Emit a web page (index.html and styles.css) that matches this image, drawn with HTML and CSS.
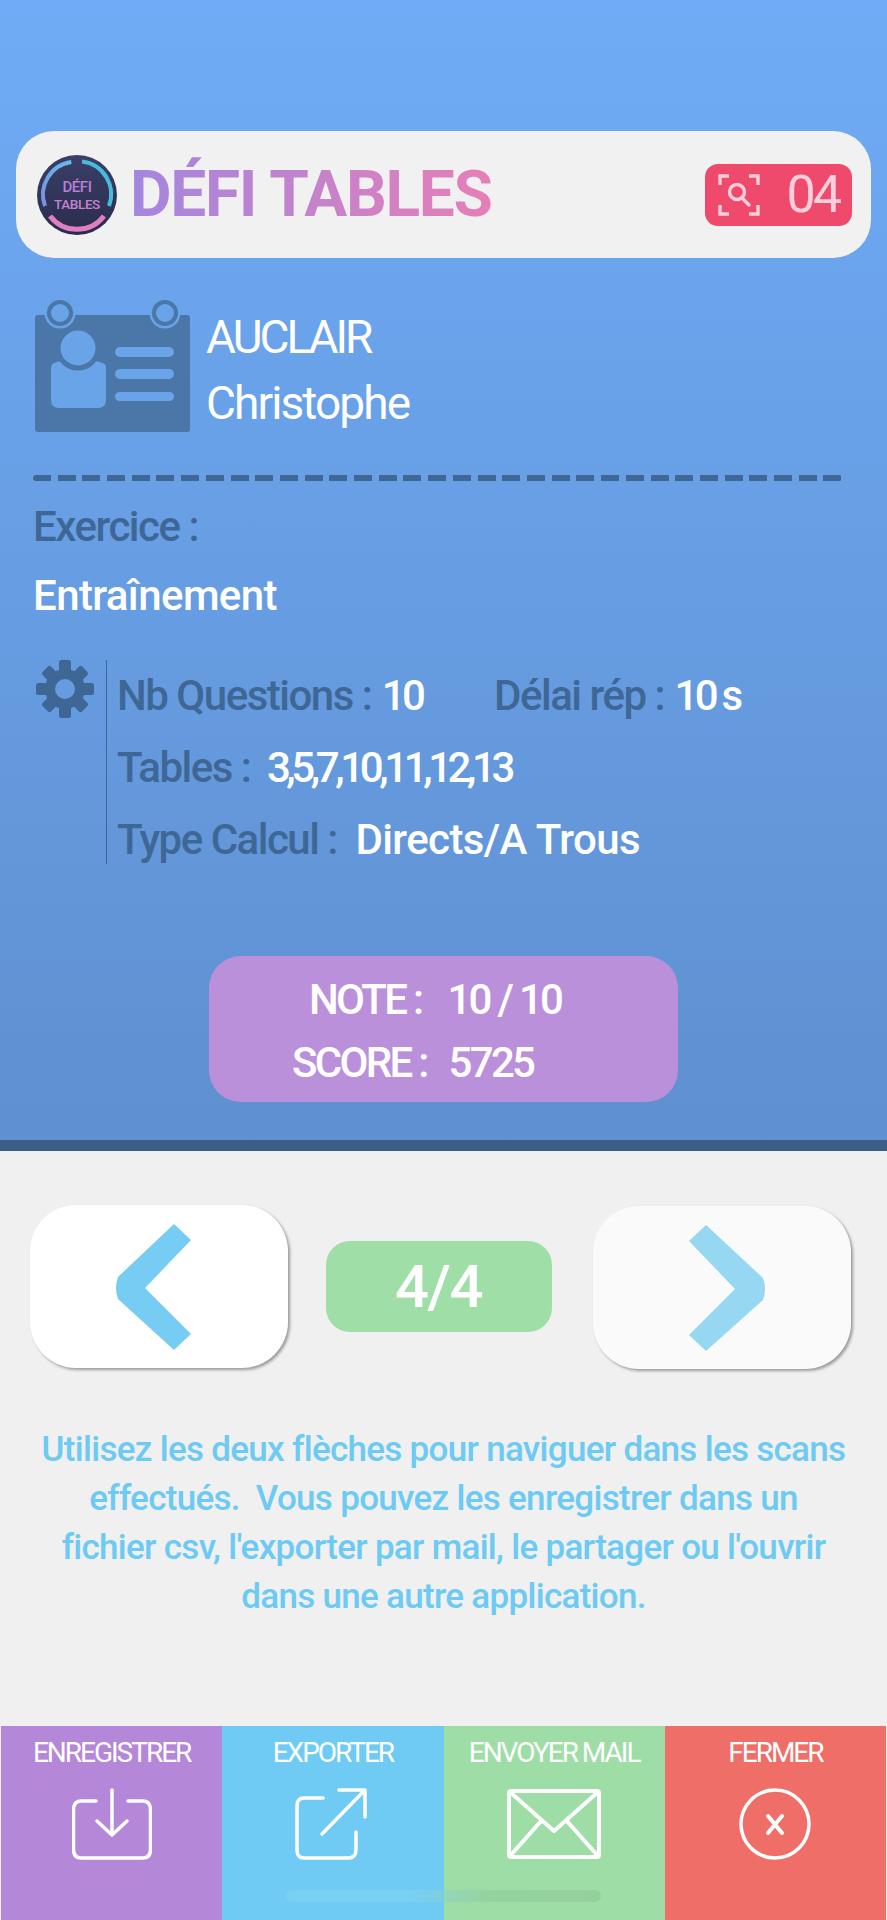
FILE: index.html
```html
<!DOCTYPE html>
<html lang="fr">
<head>
    <meta charset="UTF-8">
    <meta name="viewport" content="width=device-width, initial-scale=1.0">
    <title>Défi Tables</title>
    <link rel="stylesheet" href="styles.css">
</head>
<body>
    <div class="result">
        <div class="header">
            <svg class="logo" viewBox="0 0 80 80">
                <defs>
                    <linearGradient id="logoBg" x1="0" y1="0" x2="0" y2="1">
                        <stop offset="0" stop-color="#3b3f66"/>
                        <stop offset="1" stop-color="#292c4d"/>
                    </linearGradient>
                    <linearGradient id="arcLeft" x1="1" y1="0" x2="0" y2="1">
                        <stop offset="0" stop-color="#62c0ea"/>
                        <stop offset="1" stop-color="#7b8fe0"/>
                    </linearGradient>
                </defs>
                <circle cx="40" cy="40" r="40" fill="url(#logoBg)"/>
                <path d="M34.3 7 A33 33 0 0 0 8 51" fill="none" stroke="url(#arcLeft)" stroke-width="4"/>
                <path d="M45 6.5 A33 33 0 0 1 72 51" fill="none" stroke="#45bcdc" stroke-width="4"/>
                <path d="M13 61 A34 34 0 0 0 67 61" fill="none" stroke="#df7fc0" stroke-width="5"/>
                <text class="logo-text" x="40" y="37" font-size="15" fill="#b77fd8">DÉFI</text>
                <text class="logo-text" x="40" y="54" font-size="13.5" fill="#c583cf">TABLES</text>
            </svg>
            <h1 class="title">DÉFI TABLES</h1>
            <div class="badge">
                <svg class="scan-icon" viewBox="0 0 42 42" fill="none" stroke="#fbd0dc" stroke-width="3.4">
                    <path d="M2 11V2H11M31 2H40V11M2 31V40H11M31 40H40V31"/>
                    <circle cx="19" cy="18" r="7.5"/>
                    <path d="M24 24L31 31" stroke-linecap="round"/>
                </svg>
                <span>04</span>
            </div>
        </div>

        <div class="person">
            <svg class="card-icon" viewBox="0 0 155 132">
                <rect x="0" y="15" width="155" height="117" rx="3" fill="#4a76a8"/>
                <circle cx="25" cy="13" r="15.5" fill="#69a4e9"/>
                <circle cx="130" cy="13" r="15.5" fill="#69a4e9"/>
                <circle cx="25" cy="13" r="11" fill="none" stroke="#4a76a8" stroke-width="4"/>
                <circle cx="130" cy="13" r="11" fill="none" stroke="#4a76a8" stroke-width="4"/>
                <path d="M16 67Q16 62 28 61H58Q71 62 71 67V100Q71 108 63 108H24Q16 108 16 100Z" fill="#69a4e9"/>
                <circle cx="43" cy="48" r="20" fill="#69a4e9" stroke="#4a76a8" stroke-width="5"/>
                <rect x="80" y="47" width="59" height="10" rx="5" fill="#69a4e9"/>
                <rect x="80" y="69" width="59" height="10" rx="5" fill="#69a4e9"/>
                <rect x="80" y="92" width="59" height="9" rx="4.5" fill="#69a4e9"/>
            </svg>
            <div class="names">
                <div class="surname">AUCLAIR</div>
                <div>Christophe</div>
            </div>
        </div>

        <div class="dashes"></div>

        <div class="exercise">
            <div class="label">Exercice :</div>
            <div class="value">Entraînement</div>
        </div>

        <div class="settings">
            <svg class="gear" viewBox="0 0 58 58" fill="#3f6796">
                <path fill-rule="evenodd" d="M29 9a20 20 0 1 0 0 40a20 20 0 1 0 0-40zM29 19a10 10 0 1 1 0 20a10 10 0 1 1 0-20z"/>
                <g>
                    <rect x="23" y="0" width="12" height="12" rx="2.5"/>
                    <rect x="23" y="46" width="12" height="12" rx="2.5"/>
                    <rect x="0" y="23" width="12" height="12" rx="2.5"/>
                    <rect x="46" y="23" width="12" height="12" rx="2.5"/>
                </g>
                <g transform="rotate(45 29 29)">
                    <rect x="23" y="1" width="12" height="12" rx="2.5"/>
                    <rect x="23" y="45" width="12" height="12" rx="2.5"/>
                    <rect x="1" y="23" width="12" height="12" rx="2.5"/>
                    <rect x="45" y="23" width="12" height="12" rx="2.5"/>
                </g>
            </svg>
            <div class="params">
                <div class="param"><span class="label">Nb Questions :</span> <span class="value digits">10</span><span class="label delay">Délai rép :</span> <span class="value digits">10 s</span></div>
                <div class="param"><span class="label">Tables :</span> <span class="value digits tables-list">3,5,7,10,11,12,13</span></div>
                <div class="param"><span class="label">Type Calcul :</span> <span class="value spaced">Directs/A Trous</span></div>
            </div>
        </div>

        <div class="score-box">
            <div class="note-line">NOTE :<span class="score-value">10 / 10</span></div>
            <div class="score-line">SCORE :<span class="score-value">5725</span></div>
        </div>
    </div>

    <div class="nav-row">
        <button class="arrow-btn prev">
            <svg viewBox="0 0 75 126"><path d="M58 0L75 16L29 64L75 110L58 126L2 75Q-2 64 2 53Z" fill="#76ccf3"/></svg>
        </button>
        <div class="counter">4/4</div>
        <button class="arrow-btn next">
            <svg viewBox="0 0 75 126"><path d="M17 0L0 16L46 64L0 110L17 126L74 75Q78 64 74 53Z" fill="#96d7f1"/></svg>
        </button>
    </div>

    <p class="help">Utilisez les deux flèches pour naviguer dans les scans<br>effectués.&nbsp; Vous pouvez les enregistrer dans un<br>fichier csv, l'exporter par mail, le partager ou l'ouvrir<br>dans une autre application.</p>

    <div class="actions">
        <div class="action save">
            <span>ENREGISTRER</span>
            <svg viewBox="0 0 80 72" fill="none" stroke="#fff" stroke-width="3.5" stroke-linecap="round" stroke-linejoin="round">
                <path d="M24 13H9Q1.5 13 1.500 22V61Q1.500 70 9 70H71Q78.500 70 78.500 61V22Q78.500 13 71 13H56"/>
                <path d="M40 2V47M25 33L40 47L55 33"/>
            </svg>
        </div>
        <div class="action export">
            <span>EXPORTER</span>
            <svg viewBox="0 0 72 72" fill="none" stroke="#fff" stroke-width="3.500" stroke-linecap="round" stroke-linejoin="round">
                <path d="M28 10H9Q2 10 2 18V62Q2 70 9 70H53Q61 70 61 62V44"/>
                <path d="M44 2H70V29M69 3L27 46"/>
            </svg>
        </div>
        <div class="action mail">
            <span>ENVOYER MAIL</span>
            <svg viewBox="0 0 94 70" fill="none" stroke="#fff" stroke-width="4" stroke-linejoin="round">
                <rect x="2" y="2" width="90" height="66" rx="2"/>
                <path d="M3 3L47 42L91 3M35 31L3 67M59 31L91 67"/>
            </svg>
        </div>
        <div class="action close">
            <span>FERMER</span>
            <svg viewBox="0 0 72 72" fill="none" stroke="#fff" stroke-linecap="round">
                <circle cx="36" cy="36" r="34" stroke-width="3.500"/>
                <path d="M29 28L43 45M43 28L29 45" stroke-width="4"/>
            </svg>
        </div>
        <div class="home-bar"></div>
    </div>
</body>
</html>
```

FILE: styles.css
```css
* {
    box-sizing: border-box;
}

body {
    margin: 0;
    padding: 0;
    width: 887px;
    height: 1920px;
    overflow: hidden;
    display: flex;
    flex-direction: column;
    background: #f0f0f0;
    font-family: 'Roboto', sans-serif;
    font-weight: 500;
    color: #fff;
}

/* partie haute */
.result {
    height: 1151px;
    padding-top: 131px;
    background: linear-gradient(180deg, #6fabf6 0%, #5f90d0 100%);
    border-bottom: 11px solid #3c5d87;
}

.header {
    display: flex;
    align-items: center;
    height: 127px;
    margin: 0 16px;
    padding: 0 18px 0 21px;
    background: #f1f1f1;
    border-radius: 38px;
}

.logo {
    width: 80px;
    height: 80px;
    flex: none;
}

.logo-text {
    font-family: 'Roboto', sans-serif;
    font-weight: 500;
    text-anchor: middle;
    letter-spacing: -0.4px;
}

.title {
    margin: 0 0 0 13px;
    font-size: 64px;
    font-weight: bold;
    line-height: 76px;
    letter-spacing: -1.3px;
    white-space: nowrap;
    background: linear-gradient(90deg, #a386e0 0%, #e67fb6 100%);
    -webkit-background-clip: text;
    background-clip: text;
    color: transparent;
}

.badge {
    display: flex;
    align-items: center;
    justify-content: space-between;
    width: 147px;
    height: 62px;
    margin-left: auto;
    margin-right: 1px;
    padding: 0 13px 0 13px;
    background: #ef4a6b;
    border-radius: 13px;
    color: #fbd0dc;
    font-size: 52px;
    font-weight: 400;
    letter-spacing: -3px;
}

.scan-icon {
    width: 42px;
    height: 42px;
}

.person {
    display: flex;
    margin: 42px 0 0 35px;
}

.card-icon {
    width: 155px;
    height: 132px;
    flex: none;
}

.names {
    margin: 4px 0 0 16px;
    font-size: 46px;
    font-weight: 400;
    line-height: 66px;
    letter-spacing: -1.9px;
}

.surname {
    letter-spacing: -3px;
}

.dashes {
    width: 809px;
    height: 6px;
    margin: 39px 0 0 33px;
    background: repeating-linear-gradient(90deg, #3f6796 0, #3f6796 18px, transparent 18px, transparent 24.7px);
    border-radius: 3px;
}

.label {
    color: #3f6796;
    letter-spacing: -1.5px;
}

.value {
    color: #fff;
    letter-spacing: -0.6px;
}

.digits {
    letter-spacing: -3.7px;
}

.exercise {
    margin: 11px 0 0 33px;
    font-size: 42px;
    line-height: 69px;
}

.settings {
    display: flex;
    margin: 30px 0 0 36px;
}

.gear {
    width: 58px;
    height: 58px;
    flex: none;
}

.params {
    height: 204px;
    margin-left: 12px;
    padding: 0 0 0 10px;
    border-left: 1px solid #3f6796;
    font-size: 42px;
    line-height: 72px;
}

.param {
    white-space: nowrap;
}

.delay {
    margin-left: 72px;
}

.spaced {
    margin-left: 8px;
}

.tables-list {
    margin-left: 6px;
    letter-spacing: -4.4px;
}

.score-box {
    width: 469px;
    height: 146px;
    margin: 92px 0 0 209px;
    padding-top: 12px;
    background: #bb90db;
    border-radius: 32px;
    font-size: 42px;
    line-height: 63px;
    letter-spacing: -2.7px;
}

.note-line {
    padding-left: 100px;
}

.score-line {
    padding-left: 83px;
}

.score-value {
    margin-left: 26px;
}

.score-line .score-value {
    margin-left: 22px;
}

/* navigation */
.nav-row {
    display: flex;
    align-items: center;
    justify-content: space-between;
    margin: 53px 36px 0 30px;
}

.arrow-btn {
    display: flex;
    align-items: center;
    justify-content: center;
    width: 258px;
    height: 163px;
    padding: 0;
    background: #fff;
    border: none;
    border-radius: 46px;
    box-shadow: 2px 2px 3px rgba(0, 0, 0, 0.35);
}

.arrow-btn.prev {
    padding-right: 11px;
}

.arrow-btn.next {
    padding-left: 9px;
    background: #fafafa;
    margin-top: 2px;
}

.arrow-btn svg {
    width: 75px;
    height: 126px;
    overflow: visible;
}

.counter {
    width: 226px;
    height: 91px;
    margin-right: 4px;
    background: #9fdea6;
    border-radius: 24px;
    font-size: 60px;
    line-height: 91px;
    letter-spacing: -1.5px;
    text-align: center;
}

.help {
    margin: 56px 0 0;
    color: #6dcaf2;
    font-size: 35px;
    font-weight: 500;
    line-height: 49px;
    letter-spacing: -0.7px;
    text-align: center;
}

/* barre du bas */
.actions {
    position: relative;
    display: grid;
    grid-template-columns: repeat(4, 1fr);
    height: 194px;
    margin-top: auto;
    padding: 0 1px;
}

.action {
    display: flex;
    flex-direction: column;
    align-items: center;
    padding-top: 9px;
    font-size: 28px;
    font-weight: 400;
    line-height: 36px;
    letter-spacing: -2px;
}

.action svg {
    height: 72px;
    margin-top: 17px;
}

.save {
    background: #b587d8;
}

.save svg {
    width: 80px;
}

.export {
    background: #6fcbf3;
}

.export svg {
    width: 72px;
    margin-right: 4px;
}

.mail {
    background: #9edda6;
}

.mail svg {
    width: 94px;
}

.close {
    background: #ef6e67;
}

.close svg {
    width: 72px;
}

.home-bar {
    position: absolute;
    left: 286px;
    bottom: 18px;
    width: 315px;
    height: 12px;
    border-radius: 6px;
    background: linear-gradient(90deg, rgba(130, 215, 240, 0.5) 0%, rgba(130, 215, 240, 0.5) 40%, rgba(140, 200, 150, 0.5) 65%, rgba(140, 200, 150, 0.6) 100%);
}
```
